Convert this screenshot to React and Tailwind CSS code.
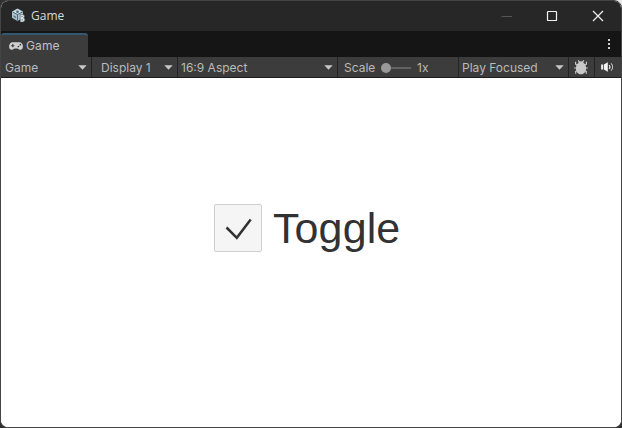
import React from "react";

function Arrow() {
  return (
    <svg width="9" height="5" viewBox="0 0 9 5" className="shrink-0 fill-[#c8c8c8]">
      <path d="M0.3 0.2H8.7L4.5 4.8Z" />
    </svg>
  );
}

function Cell({ className, children }) {
  return (
    <div className={`flex h-full shrink-0 items-center border-r border-[#232323] ${className}`}>
      {children}
    </div>
  );
}

function AppIcon() {
  return (
    <svg width="15" height="15" viewBox="0 0 15 15" className="-mt-px shrink-0">
      <path d="M6.5 0.6L12 3.6V9.8L6.5 13L1 9.8V3.6Z" fill="#a9c0ce" />
      <path d="M6.5 1L11 3.7L6.5 6.2L2 3.7Z" fill="#d0dde5" />
      <path d="M6.5 6.5V12.5M6.5 6.5L1.6 4M6.5 6.5L11.5 4" stroke="#516a7a" strokeWidth="1" />
      <circle cx="6.5" cy="3.7" r="1.3" fill="#4a6373" />
      <path d="M2.6 7.2L4.9 8.5V10.3L2.6 9Z" fill="#5b7685" />
      <path
        d="M9.2 6.6H11.6C14 6.6 14 9.6 12.6 10C14.6 10.5 14.2 14 11.6 14H9.2Z"
        fill="#dce3e7"
        stroke="#40515c"
        strokeWidth="0.5"
      />
      <path d="M10.6 8.5H11.7M10.6 11.9H11.9" stroke="#52616b" strokeWidth="0.9" />
    </svg>
  );
}

function GamepadIcon() {
  return (
    <svg width="14" height="8" viewBox="0 0 14 8" className="shrink-0">
      <path
        d="M3.6 0.2C1.6 0.2 0.1 1.9 0.1 4.2C0.1 6.5 1.1 7.8 2.7 7.8C4 7.8 4.5 6.4 5.6 6.4H8.4C9.5 6.4 10 7.8 11.3 7.8C12.9 7.8 13.9 6.5 13.9 4.2C13.9 1.9 12.4 0.2 10.4 0.2Z"
        fill="#d0d0d0"
      />
      <path d="M3.8 2.1V5.3M2.2 3.7H5.4" stroke="#3c3c3c" strokeWidth="1.1" />
      <circle cx="11.3" cy="2.7" r="0.85" fill="#3c3c3c" />
      <circle cx="9.4" cy="4.5" r="0.85" fill="#3c3c3c" />
    </svg>
  );
}

function BugIcon() {
  return (
    <svg width="14" height="15" viewBox="0 0 14 15" fill="none" className="-ml-px">
      <path
        d="M4.2 0.3L5.5 2.2M9.8 0.3L8.5 2.2M3.8 5.3L1.6 4.2V1.8M10.2 5.3L12.4 4.2V1.8M3.5 8H0.2M10.5 8H13.8M3.8 10.5L1.7 11.4V13.8M10.2 10.5L12.3 11.4V13.8"
        stroke="#c8c8c8"
        strokeWidth="1.2"
      />
      <path
        d="M7 1.3C8.6 1.3 9.5 2 9.8 3.3C11.4 4.2 12.1 6.1 12.1 8.2C12.1 11.8 9.9 14.3 7 14.3C4.1 14.3 1.9 11.8 1.9 8.2C1.9 6.1 2.6 4.2 4.2 3.3C4.5 2 5.4 1.3 7 1.3Z"
        fill="#c8c8c8"
      />
    </svg>
  );
}

function SpeakerIcon() {
  return (
    <svg width="13" height="10" viewBox="0 0 13 10" fill="none" className="-mt-px -ml-[2px]">
      <path d="M0.1 2.4H2.1V7.6H0.1Z" fill="#eeeeee" />
      <path d="M2.9 2.5L6.8 0.2V9.8L2.9 7.5Z" fill="#f4f4f4" />
      <path d="M8.1 3.1C9 4.1 9 5.9 8.1 6.9" stroke="#e8e8e8" strokeWidth="1.2" />
      <path d="M10 1.3C12.2 3.2 12.2 6.8 10 8.7" stroke="#bcbcbc" strokeWidth="1.1" />
    </svg>
  );
}

export default function App() {
  return (
    <div className="h-[428px] w-[622px] overflow-hidden bg-[#303030] bg-[linear-gradient(90deg,#303030_72%,#e8e8e8_73%)] bg-[length:100%_12px] bg-no-repeat font-['Inter',sans-serif]">
      <div className="flex h-full w-full flex-col overflow-hidden rounded-lg border border-[#444444] bg-white">
        <header className="flex h-[30px] shrink-0 items-center bg-[#272727] pl-[10px]">
          <AppIcon />
          <span className="ml-[5px] font-['Open_Sans',sans-serif] text-[12px] leading-4 text-[#d8d8d8]">Game</span>
          <div className="ml-auto flex items-center">
            <svg width="46" height="28" viewBox="0 0 46 28" fill="none">
              <path d="M18.5 14.5H29" stroke="#555555" />
            </svg>
            <svg width="46" height="28" viewBox="0 0 46 28" fill="none">
              <rect x="18.5" y="9.5" width="9" height="9" rx="0.6" stroke="#f4f4f4" strokeWidth="1.2" />
            </svg>
            <svg width="46" height="28" viewBox="0 0 46 28" fill="none">
              <path d="M18 9L28 19M28 9L18 19" stroke="#f0f0f0" strokeWidth="1.2" />
            </svg>
          </div>
        </header>
        <div className="flex h-[26px] shrink-0 items-end bg-[#151515]">
          <div className="flex h-6 w-[87px] items-center rounded-t-[3px] border-t-2 border-[#34586f] bg-[#3c3c3c] pl-2">
            <GamepadIcon />
            <span className="ml-[3px] text-[12px] leading-4 tracking-[0.01em] text-[#c0c0c0]">Game</span>
          </div>
          <div className="mr-[11px] mb-[8px] ml-auto flex flex-col gap-[2px]">
            <i className="size-[2px] bg-[#cfcfcf]" />
            <i className="size-[2px] bg-[#cfcfcf]" />
            <i className="size-[2px] bg-[#cfcfcf]" />
          </div>
        </div>
        <div className="flex h-[21px] shrink-0 items-center border-b border-[#1f1a1f] bg-[#3c3c3c] text-[12px] leading-4 text-[#bababa] [&_span]:pt-px">
          <Cell className="w-[91px] justify-between pr-1 pl-1"><span>Game</span><Arrow /></Cell>
          <Cell className="w-[86px] justify-between pr-1 pl-[9px]"><span>Display 1</span><Arrow /></Cell>
          <Cell className="w-[160px] justify-between pr-1 pl-[3px]"><span>16:9 Aspect</span><Arrow /></Cell>
          <Cell className="w-[121px] pl-[6px]">
            <span className="w-8">Scale</span>
            <span className="ml-[5px] flex w-[30px] items-center">
              <i className="size-[10px] shrink-0 rounded-full bg-[#999999]" />
              <i className="h-[2px] flex-1 bg-[#626262]" />
            </span>
            <span className="ml-[6px]">1x</span>
          </Cell>
          <Cell className="w-[110px] justify-between pr-1 pl-[3px]"><span>Play Focused</span><Arrow /></Cell>
          <Cell className="w-[26px] justify-center"><BugIcon /></Cell>
          <div className="flex flex-1 items-center justify-center"><SpeakerIcon /></div>
        </div>
        <main className="flex flex-1 items-start bg-white pt-[126px] pl-[213px]">
          <div className="flex size-12 items-center justify-center rounded-[2px] border border-[#cfcfcf] bg-[#f5f5f5]">
            <svg width="28" height="24" viewBox="0 0 28 24" fill="none">
              <path d="M2.5 11.5L12.8 21.8L26.7 3.5" stroke="#323232" strokeWidth="2.5" />
            </svg>
          </div>
          <span className="ml-[11px] font-['Liberation_Sans',Arial,sans-serif] text-[43px] leading-[48px] tracking-[0.1px] text-[#323232]">Toggle</span>
        </main>
      </div>
    </div>
  );
}
